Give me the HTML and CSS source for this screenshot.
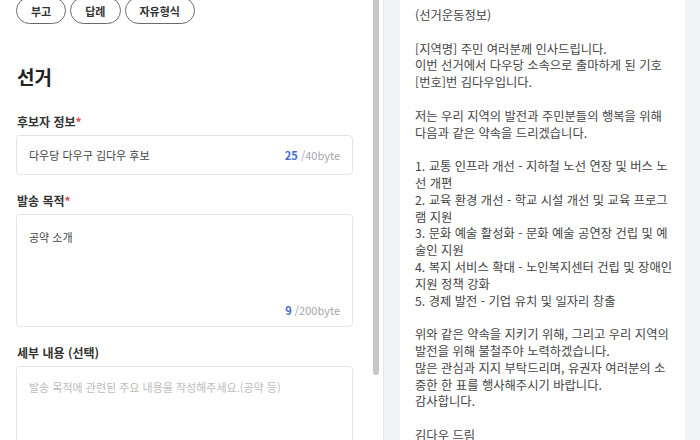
FILE: index.html
```html
<!DOCTYPE html>
<html lang="ko">
<head>
    <meta charset="UTF-8">
    <meta name="viewport" content="width=device-width, initial-scale=1.0">
    <title>문자 작성</title>
    <link rel="stylesheet" href="styles.css">
</head>
<body>
    <div class="left-panel">
        <div class="form">
            <div class="pills">
                <button class="pill">부고</button>
                <button class="pill">답례</button>
                <button class="pill">자유형식</button>
            </div>

            <h2 class="section-title">선거</h2>

            <label class="field-label">후보자 정보<span class="req">*</span></label>
            <div class="field">
                <input type="text" value="다우당 다우구 김다우 후보">
                <span class="count"><b>25</b> /40byte</span>
            </div>

            <label class="field-label">발송 목적<span class="req">*</span></label>
            <div class="field area">
                <textarea>공약 소개</textarea>
                <span class="count"><b>9</b> /200byte</span>
            </div>

            <label class="field-label">세부 내용 (선택)</label>
            <div class="field area tall">
                <textarea placeholder="발송 목적에 관련된 주요 내용을 작성해주세요.(공약 등)"></textarea>
            </div>
        </div>
        <div class="scrollbar">
            <div class="thumb"></div>
        </div>
    </div>

    <div class="right-panel">
        <div class="preview-card">
<div class="preview-text">(선거운동정보)

[지역명] 주민 여러분께 인사드립니다.
이번 선거에서 다우당 소속으로 출마하게 된 기호
[번호]번 김다우입니다.

저는 우리 지역의 발전과 주민분들의 행복을 위해
다음과 같은 약속을 드리겠습니다.

1. 교통 인프라 개선 - 지하철 노선 연장 및 버스 노선 개편
2. 교육 환경 개선 - 학교 시설 개선 및 교육 프로그램 지원
3. 문화 예술 활성화 - 문화 예술 공연장 건립 및 예술인 지원
4. 복지 서비스 확대 - 노인복지센터 건립 및 장애인 지원 정책 강화
5. 경제 발전 - 기업 유치 및 일자리 창출

위와 같은 약속을 지키기 위해, 그리고 우리 지역의 발전을 위해 불철주야 노력하겠습니다.
많은 관심과 지지 부탁드리며, 유권자 여러분의 소중한 한 표를 행사해주시기 바랍니다.
감사합니다.

김다우 드림</div>
        </div>
    </div>
</body>
</html>
```

FILE: styles.css
```css
body {
    margin: 0;
    width: 700px;
    height: 440px;
    overflow: hidden;
    display: flex;
    font-family: "Noto Sans CJK KR", "Noto Sans", sans-serif;
    color: #333;
    background-color: #fff;
}
.left-panel {
    width: 383px;
    flex-shrink: 0;
    display: flex;
    border-right: 1px solid #e4e6ea;
    background-color: #fff;
}
.form {
    flex: 1;
    padding: 0 19px 0 16px;
}
.scrollbar {
    width: 10px;
    padding-left: 1px;
}
.thumb {
    width: 6px;
    height: 375px;
    background-color: #c6c7c9;
    border-radius: 0 0 3px 3px;
}
.pills {
    display: flex;
    gap: 4px;
    margin-top: -3px;
}
.pill {
    height: 27px;
    padding: 0 14px;
    border: 1px solid #6b6b6b;
    border-radius: 14px;
    background: #fff;
    font-family: inherit;
    font-size: 11px;
    font-weight: 700;
    color: #333;
}
.section-title {
    margin: 40px 0 0 1px;
    font-size: 19px;
    line-height: 25px;
    font-weight: 700;
    color: #222;
}
.field-label {
    display: block;
    margin: 24px 0 5px 1px;
    font-size: 12px;
    line-height: 17px;
    font-weight: 700;
    color: #333;
}
.field + .field-label {
    margin-top: 17px;
}
.req {
    color: #e5484d;
}
.field {
    display: flex;
    align-items: center;
    height: 40px;
    box-sizing: border-box;
    padding: 0 12px;
    border: 1px solid #e2e4e8;
    border-radius: 4px;
    background: #fff;
}
.field input,
.field textarea {
    flex: 1;
    border: none;
    outline: none;
    padding: 0;
    background: none;
    font-family: inherit;
    font-size: 11px;
    line-height: 17px;
    color: #444;
}
.field textarea {
    resize: none;
    width: 100%;
}
.field textarea::placeholder {
    color: #bcbcbc;
}
.field.area {
    flex-direction: column;
    align-items: stretch;
    height: 113px;
    padding: 14px 12px 8px;
}
.field.tall {
    height: 140px;
    padding-top: 12px;
}
.count {
    font-size: 11px;
    color: #a2a6ad;
    text-align: right;
}
.count b {
    color: #3d6bd6;
}
.right-panel {
    flex: 1;
    background-color: #f2f3f5;
    padding: 0 15px 0 16px;
}
.preview-card {
    height: 100%;
    background-color: #fff;
    padding: 7px 9px 0 15px;
}
.preview-text {
    white-space: pre-wrap;
    font-size: 12.3px;
    line-height: 16.8px;
    color: #444;
}
```
